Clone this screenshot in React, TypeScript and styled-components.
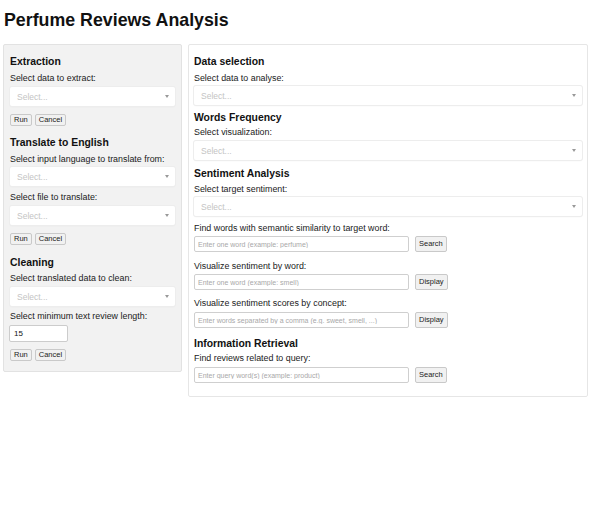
import styled, { createGlobalStyle } from 'styled-components';

const GlobalStyle = createGlobalStyle`
  html, body {
    margin: 0;
    padding: 0;
    background: #ffffff;
  }

  body {
    font-family: 'Liberation Sans', Arial, sans-serif;
    color: #111111;
  }
`;

const Select = ({ gap = 3 }: { gap?: number }) => (
  <Select.Box $gap={gap}>
    <Select.Placeholder>Select...</Select.Placeholder>
    <Select.Arrow />
  </Select.Box>
);

Select.Box = styled.div<{ $gap: number }>`
  height: 19px;
  margin-top: ${({ $gap }) => $gap}px;
  background: #ffffff;
  border-radius: 2px;
  box-shadow: 0 0 0 1px #ededed, 0 1px 2px rgba(0, 0, 0, 0.05);
  display: flex;
  align-items: center;
  justify-content: space-between;
  padding: 0 6px 0 7px;
  box-sizing: border-box;
`;

Select.Placeholder = styled.span`
  font-size: 8.5px;
  color: #c4c4c4;
`;

Select.Arrow = styled.span`
  width: 0;
  height: 0;
  border-left: 2.5px solid transparent;
  border-right: 2.5px solid transparent;
  border-top: 3px solid #999999;
`;

const InputRow = ({ placeholder, action, gap = 2 }: { placeholder: string; action: string; gap?: number }) => (
  <InputRow.Wrapper $gap={gap}>
    <InputRow.Input placeholder={placeholder} />
    <Button $tall>{action}</Button>
  </InputRow.Wrapper>
);

InputRow.Wrapper = styled.div<{ $gap: number }>`
  display: flex;
  align-items: center;
  gap: 6px;
  margin-top: ${({ $gap }) => $gap}px;
`;

InputRow.Input = styled.input`
  width: 215px;
  height: 16px;
  box-sizing: border-box;
  border: 1px solid #cfcfcf;
  border-radius: 2px;
  padding: 0 3px;
  font-family: 'Liberation Sans', Arial, sans-serif;
  font-size: 7px;
  outline: none;

  &::placeholder {
    color: #a8a8a8;
  }
`;

const Button = styled.button<{ $tall?: boolean }>`
  height: ${({ $tall }) => ($tall ? '16px' : '12px')};
  padding: 0 3px;
  font-family: 'Liberation Sans', Arial, sans-serif;
  font-size: 7.5px;
  color: #222222;
  background: #f1f1f1;
  border: 1px solid #c9c9c9;
  border-radius: 2px;
  line-height: 1;
`;

const ButtonRow = styled.div<{ $gap?: number }>`
  display: flex;
  gap: 3px;
  margin-top: ${({ $gap }) => $gap ?? 8}px;
`;

const NumberInput = styled.input`
  display: block;
  width: 59px;
  height: 17px;
  margin-top: 3px;
  margin-left: -1px;
  box-sizing: border-box;
  border: 1px solid #cccccc;
  border-radius: 2px;
  padding: 0 4px;
  font-family: 'Liberation Sans', Arial, sans-serif;
  font-size: 8px;
  color: #111111;
  background: #ffffff;
`;

const Heading = styled.h3<{ $gap?: number }>`
  margin: ${({ $gap }) => $gap ?? 0}px 0 0;
  padding-top: 1px;
  font-size: 10.4px;
  font-weight: 700;
  line-height: 15px;
`;

const Label = styled.div<{ $gap?: number }>`
  margin-top: ${({ $gap }) => $gap ?? 3}px;
  padding-top: 1px;
  font-size: 8.9px;
  line-height: 11px;
  color: #1a1a1a;
`;

const Page = styled.div`
  padding: 9px 4px 0;
`;

const Title = styled.h1`
  margin: 0 0 13px;
  font-size: 17.8px;
  font-weight: 700;
  line-height: 22px;
`;

const Columns = styled.div`
  display: flex;
  align-items: flex-start;
  gap: 6px;
  margin-left: -1px;
`;

const Panel = styled.section<{ $muted?: boolean }>`
  width: ${({ $muted }) => ($muted ? 179 : 400)}px;
  box-sizing: border-box;
  padding: ${({ $muted }) => ($muted ? '8px 6px 10px' : '8px 5px 13px')};
  background: ${({ $muted }) => ($muted ? '#f2f2f2' : '#ffffff')};
  border: 1px solid ${({ $muted }) => ($muted ? '#e2e2e2' : '#e6e6e6')};
  border-radius: 2px;
`;

const Actions = ({ gap }: { gap?: number }) => (
  <ButtonRow $gap={gap}>
    <Button>Run</Button>
    <Button>Cancel</Button>
  </ButtonRow>
);

export default function App() {
  return (
    <>
      <GlobalStyle />
      <Page>
        <Title>Perfume Reviews Analysis</Title>
        <Columns>
          <Panel $muted>
            <Heading>Extraction</Heading>
            <Label>Select data to extract:</Label>
            <Select />
            <Actions />

            <Heading $gap={8}>Translate to English</Heading>
            <Label>Select input language to translate from:</Label>
            <Select gap={2} />
            <Label $gap={5}>Select file to translate:</Label>
            <Select />
            <Actions />

            <Heading $gap={9}>Cleaning</Heading>
            <Label $gap={2}>Select translated data to clean:</Label>
            <Select />
            <Label $gap={4}>Select minimum text review length:</Label>
            <NumberInput type="number" defaultValue={15} />
            <Actions gap={7} />
          </Panel>

          <Panel>
            <Heading>Data selection</Heading>
            <Label>Select data to analyse:</Label>
            <Select gap={2} />

            <Heading $gap={4}>Words Frequency</Heading>
            <Label $gap={1}>Select visualization:</Label>
            <Select />

            <Heading $gap={5}>Sentiment Analysis</Heading>
            <Label $gap={2}>Select target sentiment:</Label>
            <Select gap={2} />
            <Label $gap={6}>Find words with semantic similarity to target word:</Label>
            <InputRow placeholder="Enter one word (example: perfume)" action="Search" />
            <Label $gap={8}>Visualize sentiment by word:</Label>
            <InputRow placeholder="Enter one word (example: smell)" action="Display" />
            <Label $gap={7}>Visualize sentiment scores by concept:</Label>
            <InputRow placeholder="Enter words separated by a comma (e.g. sweet, smell, ...)" action="Display" gap={3} />

            <Heading $gap={7}>Information Retrieval</Heading>
            <Label $gap={1}>Find reviews related to query:</Label>
            <InputRow placeholder="Enter query word(s) (example: product)" action="Search" gap={3} />
          </Panel>
        </Columns>
      </Page>
    </>
  );
}
